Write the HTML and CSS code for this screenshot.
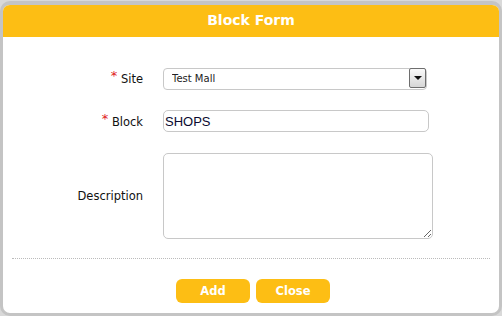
FILE: index.html
```html
<!DOCTYPE html>
<html>
<head>
<meta charset="utf-8">
<link rel="stylesheet" href="styles.css">
</head>
<body>
<div class="dialog">
  <div class="header">Block Form</div>
  <div class="body">
    <form class="form">
      <label class="label"><span class="req">*</span> Site</label>
      <div class="select-wrap">
        <select class="select"><option>Test Mall</option></select>
        <span class="arrow"><span class="tri"></span></span>
      </div>
      <label class="label"><span class="req">*</span> Block</label>
      <input class="input" type="text" value="SHOPS">
      <label class="label label-desc">Description</label>
      <textarea class="textarea"></textarea>
    </form>
    <div class="sep"></div>
    <div class="buttons">
      <button class="btn" type="button">Add</button>
      <button class="btn" type="button">Close</button>
    </div>
  </div>
</div>
</body>
</html>
```
FILE: styles.css
```css
html, body {
  margin: 0;
  padding: 0;
  width: 502px;
  height: 316px;
  overflow: hidden;
  background: #d9d9d9;
}
.dialog {
  box-sizing: border-box;
  margin-top: 1px;
  width: 502px;
  height: 315px;
  border: 3px solid #c4c4c4;
  border-top-width: 4px;
  border-radius: 10px;
  background: #fff;
  overflow: hidden;
  font-family: "DejaVu Sans", sans-serif;
}
.header {
  height: 32px;
  background: #fdbe14;
  color: #fff;
  font-weight: bold;
  font-size: 14px;
  line-height: 31px;
  text-align: center;
}
.body {
  padding-top: 30px;
}
.form {
  display: grid;
  grid-template-columns: 140px auto;
  column-gap: 20px;
  row-gap: 21px;
  align-items: center;
  margin: 0;
}
.label {
  text-align: right;
  font-size: 11.5px;
  color: #111;
}
.req {
  color: #e02020;
  font-size: 13px;
  position: relative;
  top: -3px;
}
.select-wrap {
  position: relative;
  width: 264px;
  height: 22px;
}
.select {
  appearance: none;
  -webkit-appearance: none;
  box-sizing: border-box;
  width: 264px;
  height: 22px;
  border: 1px solid #c8c8c8;
  border-radius: 4px;
  background: #fff;
  font-family: "DejaVu Sans", sans-serif;
  font-size: 10px;
  color: #222;
  padding: 0 0 0 8px;
  margin: 0;
  outline: none;
}
.arrow {
  position: absolute;
  right: 1px;
  top: 1px;
  box-sizing: border-box;
  width: 17px;
  height: 20px;
  border: 1px solid #6e6e6e;
  border-radius: 2px;
  background: linear-gradient(#fafafa, #d6d6d6);
  display: flex;
  align-items: center;
  justify-content: center;
}
.tri {
  width: 0;
  height: 0;
  border-left: 4px solid transparent;
  border-right: 4px solid transparent;
  border-top: 4px solid #111;
}
.input {
  box-sizing: border-box;
  width: 266px;
  height: 22px;
  border: 1px solid #c8c8c8;
  border-radius: 5px;
  font-family: "Liberation Sans", Arial, sans-serif;
  font-size: 13px;
  color: #0a0a30;
  padding: 0 0 0 1px;
  margin: 0;
  outline: none;
}
.textarea {
  box-sizing: border-box;
  width: 270px;
  height: 86px;
  border: 1px solid #c8c8c8;
  border-radius: 5px;
  margin: 0;
  padding: 2px;
  outline: none;
  display: block;
}
.sep {
  margin: 19px 9px 0 9px;
  border-top: 1px dotted #bbb;
}
.buttons {
  display: flex;
  justify-content: center;
  gap: 6px;
  margin-top: 20px;
  padding-left: 4px;
}
.btn {
  width: 74px;
  height: 24px;
  border: none;
  border-radius: 6px;
  background: #fdbe14;
  color: #fff;
  font-family: "DejaVu Sans", sans-serif;
  font-weight: bold;
  font-size: 11.5px;
  padding: 0;
}
```
